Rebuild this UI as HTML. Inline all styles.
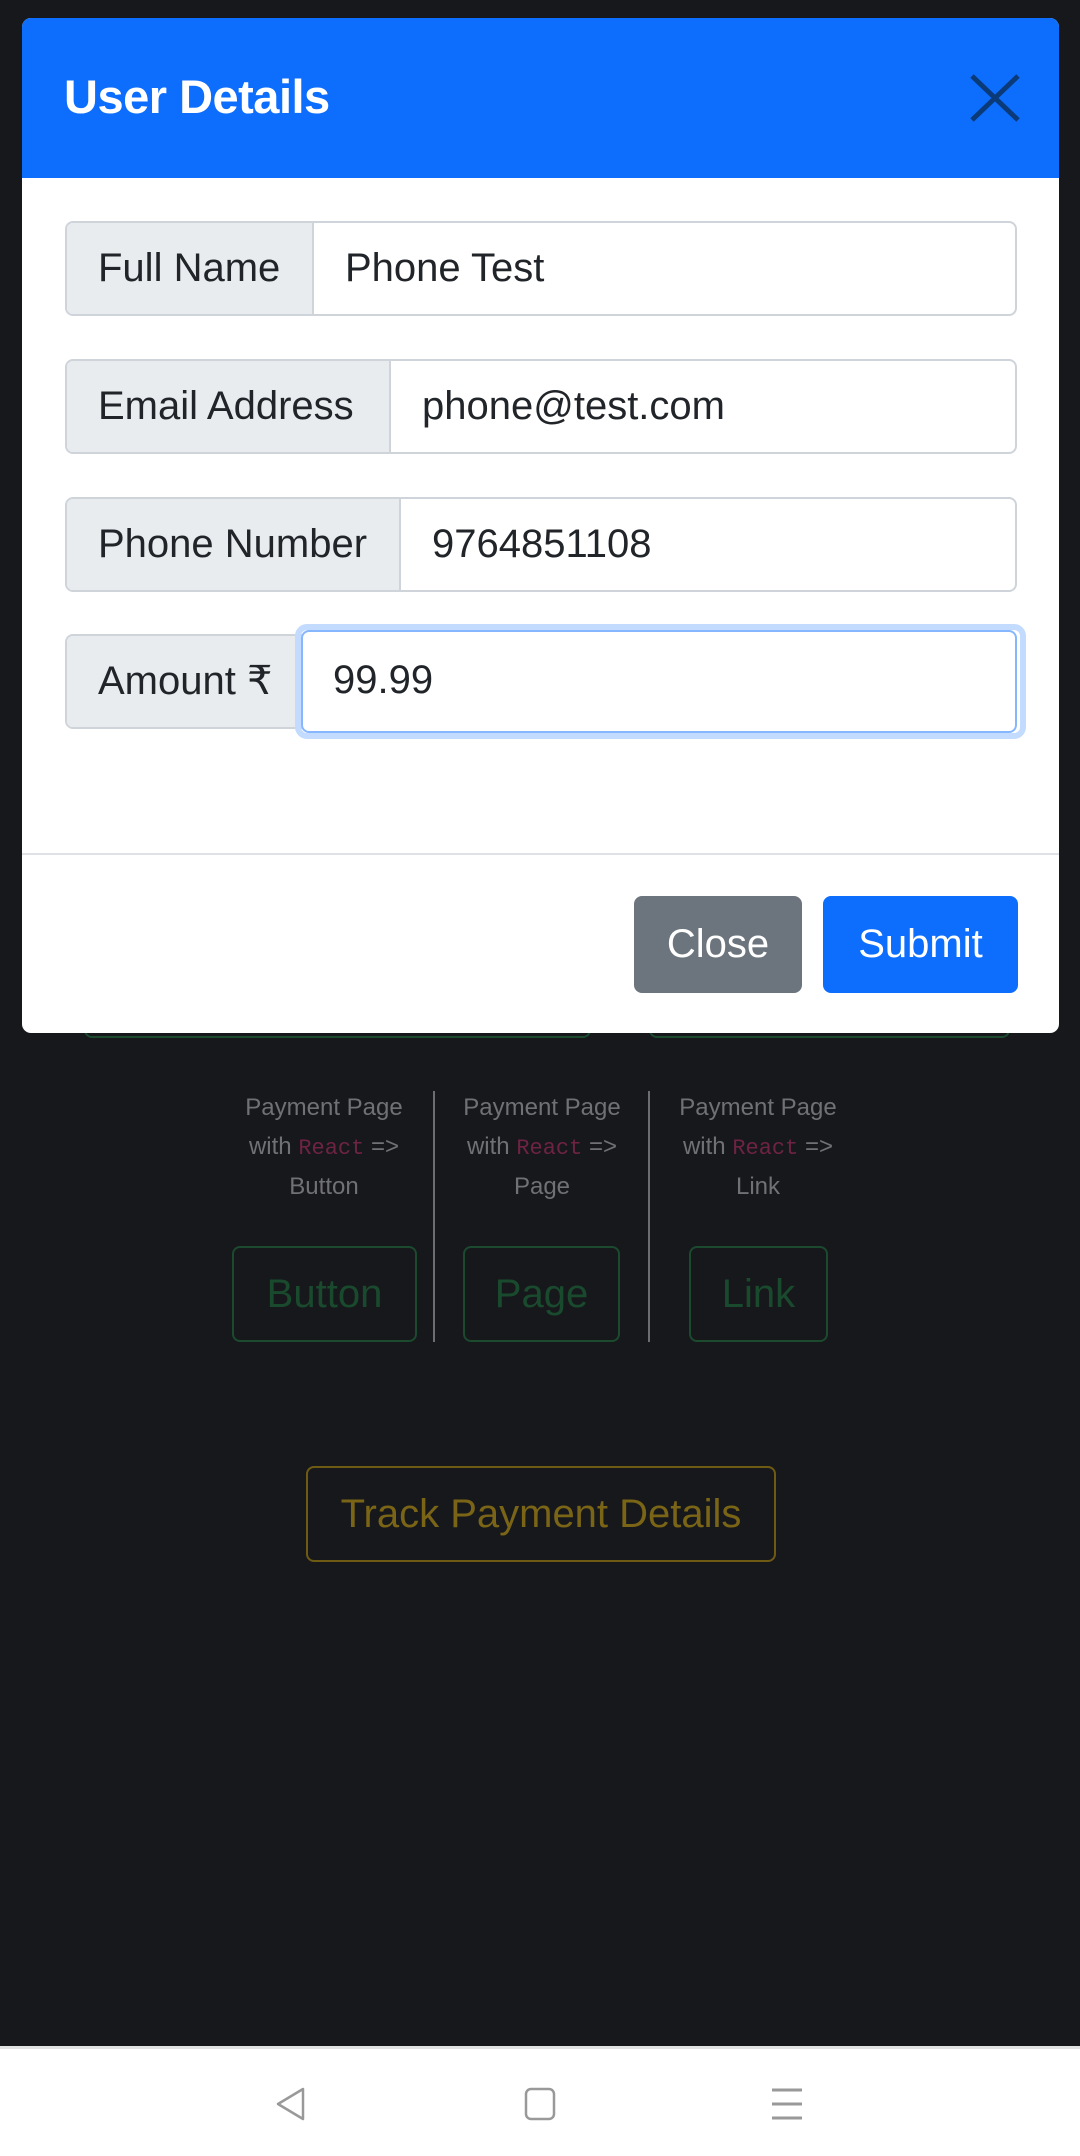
<!DOCTYPE html>
<html><head><meta charset="utf-8"><style>
*{box-sizing:border-box;margin:0;padding:0}
body{width:1080px;height:2156px;background:#17181c;font-family:"Liberation Sans",sans-serif;position:relative;overflow:hidden}
.abs{position:absolute}
.modal{left:22px;top:18px;width:1037px;height:1015px;background:#fff;border-radius:9px;overflow:hidden}
.hdr{left:0;top:0;width:1037px;height:160px;background:#0d6efd}
.title{left:42px;top:52px;font-size:47px;font-weight:bold;color:#fff;line-height:54px;letter-spacing:-0.5px}
.grp{left:43px;width:952px;height:95px;border:2px solid #ced4da;border-radius:8px;overflow:hidden;font-size:40px;color:#212529}
.lab{position:absolute;left:0;top:0;bottom:0;background:#e9ecef;border-right:2px solid #ced4da;padding-left:31px;line-height:91px}
.val{position:absolute;top:0;bottom:0;line-height:91px}
.btn{border-radius:8px;color:#fff;font-size:40px;text-align:center;line-height:97px;height:97px}
.col{font-size:24px;color:#707175;text-align:center;line-height:38.5px;width:210px}
.col code{font-family:"Liberation Mono",monospace;color:#6e2344;font-size:22px}
.ob{border:2px solid #1b4a2e;border-radius:8px;color:#1a4a2e;font-size:40px;text-align:center;line-height:92px;height:96px}
</style></head><body>
<div class="abs" style="left:84px;top:1000px;width:507px;height:38px;border:2px solid #1b4a2e;border-radius:8px"></div>
<div class="abs" style="left:649px;top:1000px;width:361px;height:38px;border:2px solid #1b4a2e;border-radius:8px"></div>

<div class="abs modal">
 <div class="abs hdr"></div>
 <div class="abs title">User Details</div>
 <svg class="abs" style="left:947px;top:55px" width="52" height="50" viewBox="0 0 52 50"><path d="M3 3L49 47M49 3L3 47" stroke="#0b3a78" stroke-width="5" fill="none"/></svg>
 <div class="abs grp" style="top:203px"><div class="lab" style="width:247px">Full Name</div><div class="val" style="left:278px">Phone Test</div></div>
 <div class="abs grp" style="top:341px"><div class="lab" style="width:324px">Email Address</div><div class="val" style="left:355px">phone@test.com</div></div>
 <div class="abs grp" style="top:479px"><div class="lab" style="width:334px">Phone Number</div><div class="val" style="left:365px">9764851108</div></div>
 <div class="abs grp" style="top:616px"><div class="lab" style="width:240px">Amount ₹</div></div>
 <div class="abs" style="left:273px;top:606px;width:731px;height:115px;border:6px solid #c2dbfe;border-radius:12px"></div>
 <div class="abs" style="left:279px;top:612px;width:716px;height:103px;border:2px solid #86b7fe;border-radius:8px;background:#fff;font-size:40px;color:#212529;line-height:97px;padding-left:30px">99.99</div>
 <div class="abs" style="left:0;top:835px;width:1037px;height:2px;background:#dee2e6"></div>
 <div class="abs btn" style="left:612px;top:878px;width:168px;background:#6c757d">Close</div>
 <div class="abs btn" style="left:801px;top:878px;width:195px;background:#0d6efd">Submit</div>
</div>

<div class="abs col" style="left:219px;top:1089px">Payment Page<br>with <code>React</code> =&gt;<br>Button</div>
<div class="abs col" style="left:437px;top:1089px">Payment Page<br>with <code>React</code> =&gt;<br>Page</div>
<div class="abs col" style="left:653px;top:1089px">Payment Page<br>with <code>React</code> =&gt;<br>Link</div>
<div class="abs" style="left:433px;top:1091px;width:2px;height:251px;background:#6c6d70"></div>
<div class="abs" style="left:648px;top:1091px;width:2px;height:251px;background:#6c6d70"></div>
<div class="abs ob" style="left:232px;top:1246px;width:185px">Button</div>
<div class="abs ob" style="left:463px;top:1246px;width:157px">Page</div>
<div class="abs ob" style="left:689px;top:1246px;width:139px">Link</div>
<div class="abs ob" style="left:306px;top:1466px;width:470px;border-color:#6f5a14;color:#7a6416">Track Payment Details</div>

<div class="abs" style="left:0;top:2046px;width:1080px;height:110px;background:#fff;border-top:3px solid #e1e3e3"></div>
<svg class="abs" style="left:270px;top:2086px" width="560" height="36" viewBox="0 0 560 36">
 <path d="M33 3L8 18L33 33Z" fill="none" stroke="#999" stroke-width="2.5" stroke-linejoin="round"/>
 <rect x="256" y="3" width="28" height="30" rx="5" fill="none" stroke="#999" stroke-width="2.5"/>
 <path d="M502 4H532M502 18H532M502 32H532" stroke="#999" stroke-width="3"/>
</svg>
</body></html>
